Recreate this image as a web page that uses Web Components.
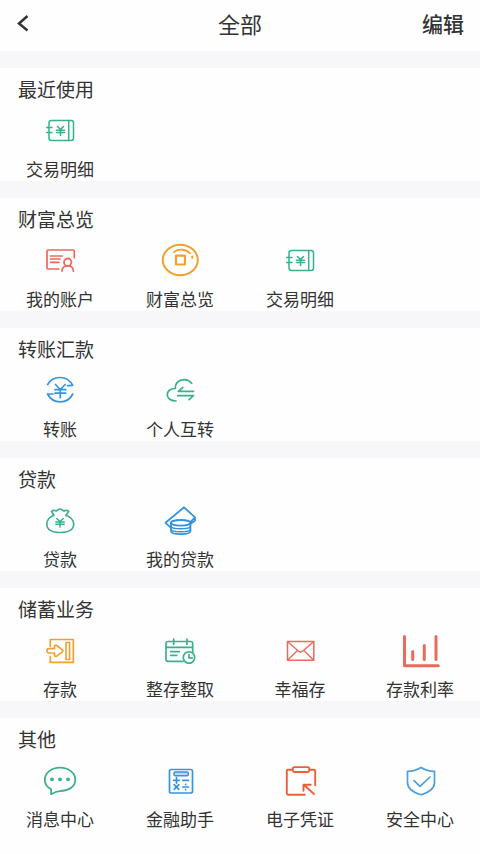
<!DOCTYPE html>
<html lang="zh-CN">
<head>
<meta charset="utf-8">
<meta name="viewport" content="width=device-width, initial-scale=1">
<title>全部</title>
<style>
  body { margin: 0; background: #fefefe; color: #333; font-family: "Noto Sans CJK SC", sans-serif; }
</style>
</head>
<body>
<all-services-page></all-services-page>

<script>
const GREEN = '#3bb08f', RED = '#ea6a5e', ORANGE = '#f0a22f', BLUE = '#3594dc';

const ICONS = {
  detail: [GREEN, `<rect x="9" y="7.5" width="24.5" height="20" rx="2.5"/><path d="M28.7 7.5v20M6.7 14.5H12M6.7 19.5H12"/><path d="M17.5 13.5l3 3 3-3M16.5 17.2h8M16.5 19.5h8M20.5 16.5v6" stroke-width="1.6"/>`],
  account: [RED, `<path d="M34.3 14.7V8a1 1 0 0 0-1-1H8a1 1 0 0 0-1 1v17a1 1 0 0 0 1 1h10.700M10.500 13h11.800M10.500 16h9.500M10.500 19.300H19" stroke-width="1.700"/><circle cx="27.700" cy="19.200" r="3.700" stroke-width="1.800"/><path d="M22 28c0-7 11.400-7 11.400 0" stroke-width="1.800"/>`],
  coin: [ORANGE, `<ellipse cx="20.3" cy="17" rx="17.5" ry="15.3" stroke-width="2"/><rect x="16" y="12.7" width="9" height="8.8" stroke-width="2.2"/><path d="M14 9c5-3.500 12-3 16 1.500" stroke-width="1.8"/><path d="M32.3 13.5v1.6" stroke-width="2"/>`],
  transfer: [BLUE, `<path d="M7.700 11.500C13 2 27.500 2 32.700 12.500L27.500 12.700M32.700 21C27.500 31.500 13 31.500 7.500 21L13 21M15.500 11.500l4.800 5 4.800-5M15 16.700h10.700M15 20.200h10.700M20.300 16.500v8.200" stroke-width="1.7"/>`],
  cloud: [GREEN, `<path d="M31.700 10.300C26 4 15 6.500 15.300 15.500 5 15 4 28 16 28M33.500 18.300H18.300l4.500-3.800M17.700 22.700h15.800L29 26.700" stroke-width="1.7"/>`],
  bag: [GREEN, `<path d="M14 12.200L11.500 8.500c2-2 3.500-1 5-.5 2-2.700 5-2.700 7 0 1.500-.5 3.500-1.500 5.300.5l-3 3.700c5 1.800 7.900 5 7.900 9 0 5-5 8.300-13.500 8.300S6.800 26.200 6.800 21.200c0-4 2.400-7.200 7.200-9z" stroke-width="1.7"/><path d="M16.700 15.500l3.300 3 3.300-3M15.800 19h8.400M15.800 21.300h8.400M20 18.500V24"/>`],
  loan: [BLUE, `<path d="M10.500 24.300L5.500 19.800 24 4.300l11 10-4.500 4.500M35 14.500V17.500l-4.500 3.500" stroke-width="1.8"/><path d="M11 19.800v8.500c0 3.700 19.400 3.700 19.400 0v-8.500" fill="#fefefe" stroke-width="1.8"/><ellipse cx="20.700" cy="19.800" rx="9.700" ry="2.800" fill="#fefefe" stroke-width="1.8"/><path d="M11 23c0 3.700 19.400 3.700 19.400 0M11 26c0 3.700 19.400 3.700 19.400 0" stroke-width="1.5"/>`],
  deposit: [ORANGE, `<path d="M10.300 13.300V6.500h23v22.800h-23v-6" stroke-width="1.7"/><rect x="26" y="9.500" width="3.600" height="17" stroke-width="1.6"/><path d="M9 15.600h5.500v-2.100c0-1.200 1.300-1.700 2.300-1l5.500 4.300c.8.700.8 1.300 0 2l-5.500 4.300c-1 .7-2.300.2-2.300-1v-2.100H9c-2.800 0-2.800-4.400 0-4.400z" stroke-width="1.700"/>`],
  calendar: [GREEN, `<g stroke-width="1.700"><path d="M23 28.300H8a2 2 0 0 1-2-2V10.500a2 2 0 0 1 2-2h22.700a2 2 0 0 1 2 2V19M6 14.300h26.700M13.700 6v5.300M27 6v5.300M10.700 18.700h8.600M10.700 22.300h6"/><circle cx="29" cy="24.500" r="5.700"/><path d="M29 21.500v3.300h3.200"/></g>`],
  mail: [RED, `<rect x="7.500" y="8.500" width="26.300" height="18.800" rx=".5"/><path d="M7.500 8.500l10.800 9.500c.7.700 1.300 0 2.200 1.300 1-1.300 1.600-.6 2.300-1.300l11-9.500M7.500 27.300l10-9.700M33.800 27.300l-10-9.700" stroke-width="1.4"/>`],
  chart: [RED, `<path d="M4.500 3.500v29.200h33.800M12.700 18.500v8M24.300 12.500v14M36 3.500v23" stroke-width="3"/>`],
  chat: [GREEN, `<path d="M11.200 31.300l-.2-5.200c-4-2-6.200-5.500-6.200-9.300C4.800 9.700 11.500 4.700 20 4.700s15.300 5 15.300 12.100S28.500 27.700 20 28.200c-3.700.2-5.500 1-8.800 3.100z" stroke-width="1.8"/><path d="M12 16.300h.1M20 16.300h.1M28 16.300h.1" stroke-width="3.8"/>`],
  calc: [BLUE, `<rect x="9.500" y="6.500" width="23" height="23.500" rx="1.800" stroke-width="1.7"/><rect x="14" y="9" width="14.300" height="3.800" rx="1.300" fill="#b9daf3"/><path d="M13.700 17.300h5.600M16.500 14.500v5.600M22.800 17.300h5.700M14.200 21.700l4.600 4.600M18.800 21.700l-4.600 4.600M22.800 24h5.700M25.700 21.300v.1M25.700 26.700v.1" stroke-width="1.7"/>`],
  clipboard: ['#ec6038', `<path d="M12.700 6.700H8a1.200 1.200 0 0 0-1.200 1.200v22.600A1.200 1.200 0 0 0 8 31.700h16.700M29.300 6.700H34a1.200 1.200 0 0 1 1.200 1.200v14.400M34 31L24 22M23.500 27.700V21.700h7.200" stroke-width="1.9"/><rect x="12.700" y="4.200" width="16.600" height="4.800" rx="1.500" stroke-width="1.8"/>`],
  shield: ['#4ba0dd', `<path d="M21 4.500c4 2.500 8 3.800 13.500 3.800v11.200c0 6-6 10-13.500 12.200C13.500 29.500 7.500 25.500 7.500 19.500V8.300C13 8.300 17 7 21 4.500zM14 17.700l6 5.600L30 14" stroke-width="1.7"/>`]
};

const PAGE = [
  ['最近使用', [['detail', '交易明细']]],
  ['财富总览', [['account', '我的账户'], ['coin', '财富总览'], ['detail', '交易明细']]],
  ['转账汇款', [['transfer', '转账'], ['cloud', '个人互转']]],
  ['贷款', [['bag', '贷款'], ['loan', '我的贷款']]],
  ['储蓄业务', [['deposit', '存款'], ['calendar', '整存整取'], ['mail', '幸福存'], ['chart', '存款利率']]],
  ['其他', [['chat', '消息中心'], ['calc', '金融助手'], ['clipboard', '电子凭证'], ['shield', '安全中心']]]
];

// Line icon on a 40x36 canvas, chosen by its name attribute.
customElements.define('line-icon', class extends HTMLElement {
  connectedCallback() {
    const [color, shapes] = ICONS[this.getAttribute('name')];
    this.attachShadow({ mode: 'open' }).innerHTML = `
      <style>:host { display: block; } svg { display: block; }</style>
      <svg width="40" height="36" viewBox="0 0 40 36" fill="none" stroke="${color}" stroke-width="1.5"
        stroke-linecap="round" stroke-linejoin="round" aria-hidden="true">${shapes}</svg>`;
  }
});

// Icon above a caption; the caption is slotted.
customElements.define('service-tile', class extends HTMLElement {
  connectedCallback() {
    this.attachShadow({ mode: 'open' }).innerHTML = `
      <style>
        :host { display: block; }
        button { display: flex; flex-direction: column; align-items: center; gap: 8px; width: 100%; margin: 0;
          padding: 0; border: 0; background: none; color: inherit; font: inherit; font-size: 17px;
          line-height: 24px; white-space: nowrap; cursor: pointer; }
      </style>
      <button type="button"><line-icon name="${this.getAttribute('icon')}"></line-icon><span><slot></slot></span></button>`;
  }
});

// Titled group of tiles in four equal columns.
customElements.define('service-group', class extends HTMLElement {
  connectedCallback() {
    this.attachShadow({ mode: 'open' }).innerHTML = `
      <style>
        :host { display: block; border-top: 17px solid #f7f7f9; padding-top: 7px; }
        h2 { margin: 0 0 10px; padding: 0 18px; font-size: 19px; line-height: 28px; font-weight: 400; }
        div { display: grid; grid-template-columns: repeat(4, 1fr); }
      </style>
      <h2>${this.getAttribute('heading')}</h2>
      <div><slot></slot></div>`;
  }
});

customElements.define('title-bar', class extends HTMLElement {
  connectedCallback() {
    this.attachShadow({ mode: 'open' }).innerHTML = `
      <style>
        :host { display: block; }
        header { display: grid; grid-template-columns: 1fr auto 1fr; align-items: center; padding: 7px 16px 12px; }
        h1 { margin: 0; font-size: 22px; line-height: 32px; font-weight: 400; }
        button { padding: 0; border: 0; background: none; color: inherit; font: inherit; cursor: pointer; }
        .back { justify-self: start; }
        .edit { justify-self: end; font-size: 21px; line-height: 32px; font-weight: 500; }
        svg { display: block; }
      </style>
      <header>
        <button class="back" type="button" aria-label="返回">
          <svg width="16" height="20" viewBox="0 0 16 20" fill="none" stroke="#333" stroke-width="2.5"><path d="M11.500 3L3 10.500l8.500 7"/></svg>
        </button>
        <h1><slot></slot></h1>
        <button class="edit" type="button">编辑</button>
      </header>`;
  }
});

customElements.define('all-services-page', class extends HTMLElement {
  connectedCallback() {
    this.attachShadow({ mode: 'open' }).innerHTML = `
      <style>:host, main { display: block; }</style>
      <title-bar>全部</title-bar>
      <main>${PAGE.map(([heading, tiles]) => `<service-group heading="${heading}">${
        tiles.map(([icon, label]) => `<service-tile icon="${icon}">${label}</service-tile>`).join('')
      }</service-group>`).join('')}</main>`;
  }
});
</script>
</body>
</html>
